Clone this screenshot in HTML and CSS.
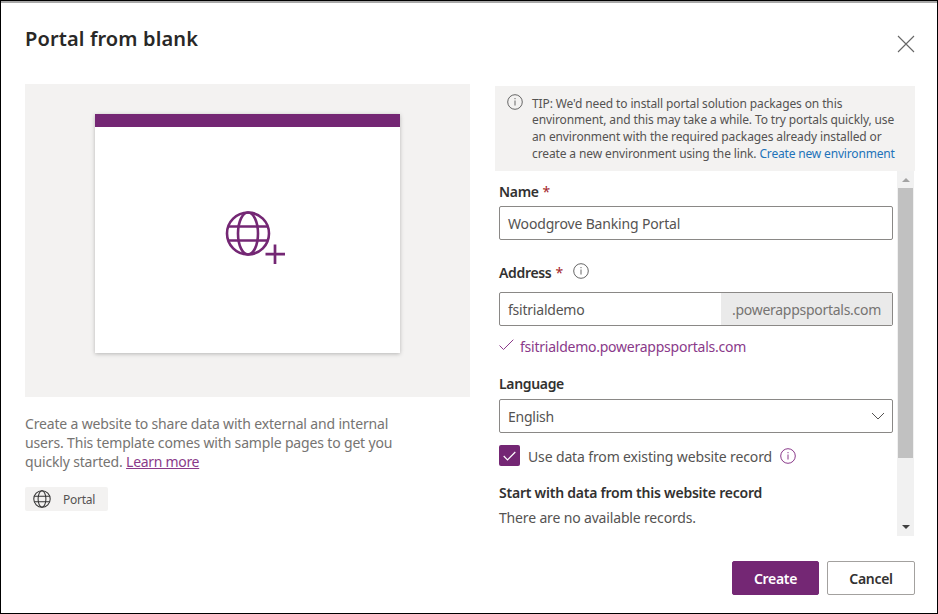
FILE: index.html
```
<!DOCTYPE html>
<html lang="en">
<head>
<meta charset="utf-8">
<title>Portal from blank</title>
<link rel="stylesheet" href="styles.css">
</head>
<body>
<svg width="0" height="0" class="defs">
  <symbol id="info" viewBox="0 0 16 16"><circle cx="8" cy="8" r="7.3" fill="none" stroke="currentColor"/><path d="M8 6.5v5M8 4v1.2" stroke="currentColor" fill="none"/></symbol>
  <symbol id="globe" viewBox="0 0 46 46"><g fill="none" stroke="currentColor"><circle cx="23" cy="23" r="21"/><ellipse cx="23" cy="23" rx="10" ry="21"/><path d="M3.5 16h39M3.5 30h39"/></g></symbol>
</svg>
<main class="dialog">
  <header class="header">
    <h1 class="title">Portal from blank</h1>
    <button class="close" aria-label="Close"><svg viewBox="0 0 18 18" width="18" height="18"><path d="M1 1l16 16M17 1L1 17" stroke="currentColor" stroke-width="1.1" fill="none"/></svg></button>
  </header>
  <div class="columns">
    <section class="overview">
      <div class="preview">
        <div class="window">
          <div class="window-bar"></div>
          <div class="window-body">
            <svg class="portal-art" viewBox="0 0 62 56" width="62" height="56"><use href="#globe" x="1" y="0.5" width="46" height="46" stroke-width="2.6"/><path d="M51 34.5v19.5M41.5 44.2h19.5" stroke="currentColor" stroke-width="2.7"/></svg>
          </div>
        </div>
      </div>
      <p class="description">Create a website to share data with external and internal<br>users. This template comes with sample pages to get you<br>quickly started. <a class="learn" href="#">Learn more</a></p>
      <div class="tag"><svg class="tag-icon" width="18" height="18"><use href="#globe" stroke-width="2.6"/></svg><span>Portal</span></div>
    </section>
    <section class="setup">
      <div class="tip">
        <svg class="info" width="16" height="16"><use href="#info"/></svg>
        <p class="tip-text">TIP: We'd need to install portal solution packages on this<br>environment, and this may take a while. To try portals quickly, use<br>an environment with the required packages already installed or<br>create a new environment using the link. <a class="env-link" href="#">Create new environment</a></p>
      </div>
      <div class="scroller">
        <form class="form">
          <div class="label name-label"><span>Name</span> <span class="req">*</span></div>
          <div class="field"><span class="value">Woodgrove Banking Portal</span></div>
          <div class="label address-label"><span>Address</span> <span class="req">*</span><svg class="info" width="16" height="16"><use href="#info"/></svg></div>
          <div class="field"><span class="value subdomain">fsitrialdemo</span><span class="suffix">.powerappsportals.com</span></div>
          <div class="valid"><svg width="15" height="12" viewBox="0 0 15 12"><path d="M.5 6.5l4 4L14.3.7" fill="none" stroke="currentColor"/></svg><span>fsitrialdemo.powerappsportals.com</span></div>
          <div class="label language-label"><span>Language</span></div>
          <div class="field"><span class="language">English</span><svg class="chevron" width="14" height="8" viewBox="0 0 14 8"><path d="M1 1l6 6 6-6" fill="none" stroke="currentColor"/></svg></div>
          <div class="check-row"><span class="checkbox"><svg width="13" height="10" viewBox="0 0 13 10"><path d="M.7 5l3.8 3.8L12.3 1" fill="none" stroke="currentColor" stroke-width="1.2"/></svg></span><span class="check-text">Use data from existing website record</span><svg class="info" width="16" height="16"><use href="#info"/></svg></div>
          <div class="label record-label"><span>Start with data from this website record</span></div>
          <div class="empty">There are no available records.</div>
        </form>
        <div class="scrollbar"><span class="arrow up"></span><span class="thumb"></span><span class="arrow down"></span></div>
      </div>
      <footer class="actions"><button class="btn primary">Create</button><button class="btn">Cancel</button></footer>
    </section>
  </div>
</main>
</body>
</html>
```
FILE: styles.css
```
* { box-sizing: border-box; }
body { margin: 0; background: #fff; font-family: "Noto Sans", sans-serif; font-size: 14px; letter-spacing: -.16px; color: #555352; }
.defs { display: block; }
h1, p { margin: 0; }
button { font: inherit; letter-spacing: inherit; padding: 0; }
.dialog { width: 938px; height: 614px; border: 1px solid #000; box-shadow: inset 0 2px #a8a8a8; padding: 24px 22px 0 24px; overflow: hidden; }
.header { display: flex; justify-content: space-between; height: 59px; }
.title { font-size: 20px; line-height: 27px; font-weight: 600; letter-spacing: .13px; color: #292827; }
.close { display: flex; width: 18px; height: 18px; margin-top: 10px; border: 0; background: none; color: #666; }
.columns { display: flex; justify-content: space-between; }
.overview { width: 445px; }
.preview { height: 313px; background: #f3f2f1; padding: 30px 70px; }
.window { width: 305px; height: 239px; background: #fff; box-shadow: 0 1px 4px rgba(0,0,0,.25); }
.window-bar { height: 13px; background: #742774; }
.window-body { height: 226px; padding: 83px 0 0 129px; color: #742774; }
.portal-art { display: block; }
.description { margin-top: 17px; line-height: 19px; letter-spacing: -.16px; color: #767472; }
.learn { letter-spacing: -.3px; color: #8a3a8a; text-decoration: underline; }
.tag { display: flex; align-items: center; width: 83px; height: 24px; margin-top: 16px; padding-left: 8px; gap: 12px; border-radius: 2px; background: #f3f2f1; font-size: 12px; letter-spacing: -.27px; }
.tag-icon { color: #333; }
.setup { width: 420px; padding-top: 2px; }
.tip { display: flex; height: 85px; padding: 8px 0 0 12px; gap: 9px; background: #f3f2f1; }
.info { display: block; flex: none; color: #666; }
.tip-text { margin-top: 1.5px; font-size: 12px; letter-spacing: -.12px; line-height: 16.7px; white-space: nowrap; }
.env-link { color: #2272b9; letter-spacing: -.17px; text-decoration: none; }
.scroller { display: flex; justify-content: space-between; height: 365px; }
.form { width: 398px; padding-left: 4px; }
.label { display: flex; align-items: center; gap: 4px; height: 20px; font-weight: 600; letter-spacing: -.33px; color: #323130; }
.name-label { margin-top: 10px; }
.req { color: #a4262c; font-weight: 400; }
.field { display: flex; align-items: center; justify-content: space-between; height: 34px; border: 1px solid #8a8886; border-radius: 2px; padding-left: 8px; }
.value { padding-top: 1px; }
.name-label + .field { margin-top: 5px; }
.address-label { margin-top: 22px; }
.address-label .info { margin: -2px 0 0 6px; }
.address-label + .field { margin-top: 10px; }
.subdomain { letter-spacing: -.22px; }
.suffix { display: flex; align-items: center; width: 171px; height: 32px; padding-left: 11px; background: #eaeaea; color: #767472; letter-spacing: -.28px; }
.valid { display: flex; align-items: center; gap: 6px; height: 20px; margin-top: 10px; letter-spacing: -.24px; color: #8a3a8a; }
.valid svg { margin-top: -2px; }
.language-label { margin-top: 17px; }
.language-label + .field { margin-top: 6px; }
.language { letter-spacing: -.23px; }
.chevron { margin-right: 7px; }
.check-row { display: flex; align-items: center; height: 21px; margin-top: 12px; }
.checkbox { display: flex; align-items: center; justify-content: center; width: 21px; height: 21px; margin-right: 8px; border-radius: 2px; background: #742774; color: #fff; }
.check-text { padding-top: 2px; letter-spacing: -.136px; }
.check-row .info { margin-left: 8px; color: #8a3a8a; }
.record-label { margin-top: 16px; letter-spacing: -.232px; }
.empty { height: 20px; line-height: 20px; margin-top: 6px; }
.scrollbar { display: flex; flex-direction: column; align-items: center; width: 17px; height: 365px; margin-right: 1px; background: #f1f1f1; }
.arrow { border: 4px solid transparent; }
.up { height: 4px; border-top: 0; border-bottom-color: #a3a3a3; margin: 7px 0 6px; }
.thumb { width: 15px; height: 270px; background: #c1c1c1; }
.down { height: 4px; border-bottom: 0; border-top-color: #404040; margin-top: 67px; }
.actions { display: flex; justify-content: flex-end; gap: 8px; margin-top: 25px; }
.btn { width: 88px; height: 34px; border: 1px solid #a3a19f; border-radius: 2px; background: #fff; color: #323130; font-weight: 600; letter-spacing: -.3px; }
.primary { width: 87px; border-color: #742774; background: #742774; color: #fff; }
```
